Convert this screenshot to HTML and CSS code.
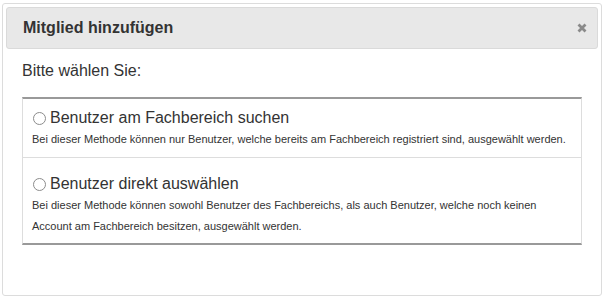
FILE: index.html
```html
<!DOCTYPE html>
<html lang="de">

<head>
    <meta charset="UTF-8" />
    <meta name="viewport" content="width=device-width, initial-scale=1.0" />
    <title>Mitglied hinzufügen</title>
    <link rel="stylesheet" href="styles.css">
</head>

<body>

    <div class="modal">
        <header class="modal-header">
            <h2>Mitglied hinzufügen</h2>
            <button class="close" type="button" aria-label="Schließen">
                <svg width="10" height="10" viewBox="0 0 10 10">
                    <path d="M1.5 1.5 L8.5 8.5 M8.5 1.5 L1.5 8.5" stroke="#8a8a8a" stroke-width="2.8" />
                </svg>
            </button>
        </header>

        <div class="modal-body">
            <p class="lead">Bitte wählen Sie:</p>

            <div class="options">
                <label class="option">
                    <span class="option-title"><input type="radio" name="method" value="search" /> Benutzer am Fachbereich suchen</span>
                    <span class="option-text">Bei dieser Methode können nur Benutzer, welche bereits am Fachbereich registriert sind, ausgewählt werden.</span>
                </label>
                <label class="option">
                    <span class="option-title"><input type="radio" name="method" value="direct" /> Benutzer direkt auswählen</span>
                    <span class="option-text">Bei dieser Methode können sowohl Benutzer des Fachbereichs, als auch Benutzer, welche noch keinen Account am Fachbereich besitzen, ausgewählt werden.</span>
                </label>
            </div>
        </div>
    </div>

</body>

</html>
```

FILE: styles.css
```css
* {
    box-sizing: border-box;
    margin: 0;
    padding: 0;
    font-family: 'Liberation Sans', Arial, sans-serif;
}

body {
    background: #fff;
    padding: 3px 3px 0 2px;
    color: #333;
}

.modal {
    width: 600px;
    height: 293px;
    padding: 3px;
    border: 1px solid #dcdcdc;
    border-radius: 3px;
    background: #fff;
}

.modal-header {
    display: flex;
    align-items: center;
    justify-content: space-between;
    height: 42px;
    padding: 0 10px 0 16px;
    background: #e8e8e8;
    border: 1px solid #dadada;
    border-radius: 3px;
}

.modal-header h2 {
    font-size: 16px;
    font-weight: bold;
    color: #333;
}

.close {
    display: flex;
    align-items: center;
    background: none;
    border: none;
    padding: 0;
    cursor: pointer;
}

.modal-body {
    padding: 0 16px;
}

.lead {
    font-size: 16px;
    line-height: 20px;
    margin: 12px 0 16px;
}

.options {
    border: 1px solid #ddd;
    border-top: 2px solid #999;
    border-bottom: 2px solid #999;
}

.option {
    display: block;
    padding: 8px 9px 7px;
    cursor: pointer;
}

.option + .option {
    border-top: 1px solid #ddd;
    padding-top: 15px;
    padding-bottom: 6px;
}

.option-title {
    display: flex;
    align-items: center;
    font-size: 16px;
    line-height: 22px;
}

.option-title input {
    appearance: none;
    width: 13px;
    height: 13px;
    margin: 0 4px 0 1px;
    border: 1.5px solid #8c8c8c;
    border-radius: 50%;
    background: #fff;
}

.option-text {
    display: block;
    font-size: 11px;
    line-height: 21px;
}
```
